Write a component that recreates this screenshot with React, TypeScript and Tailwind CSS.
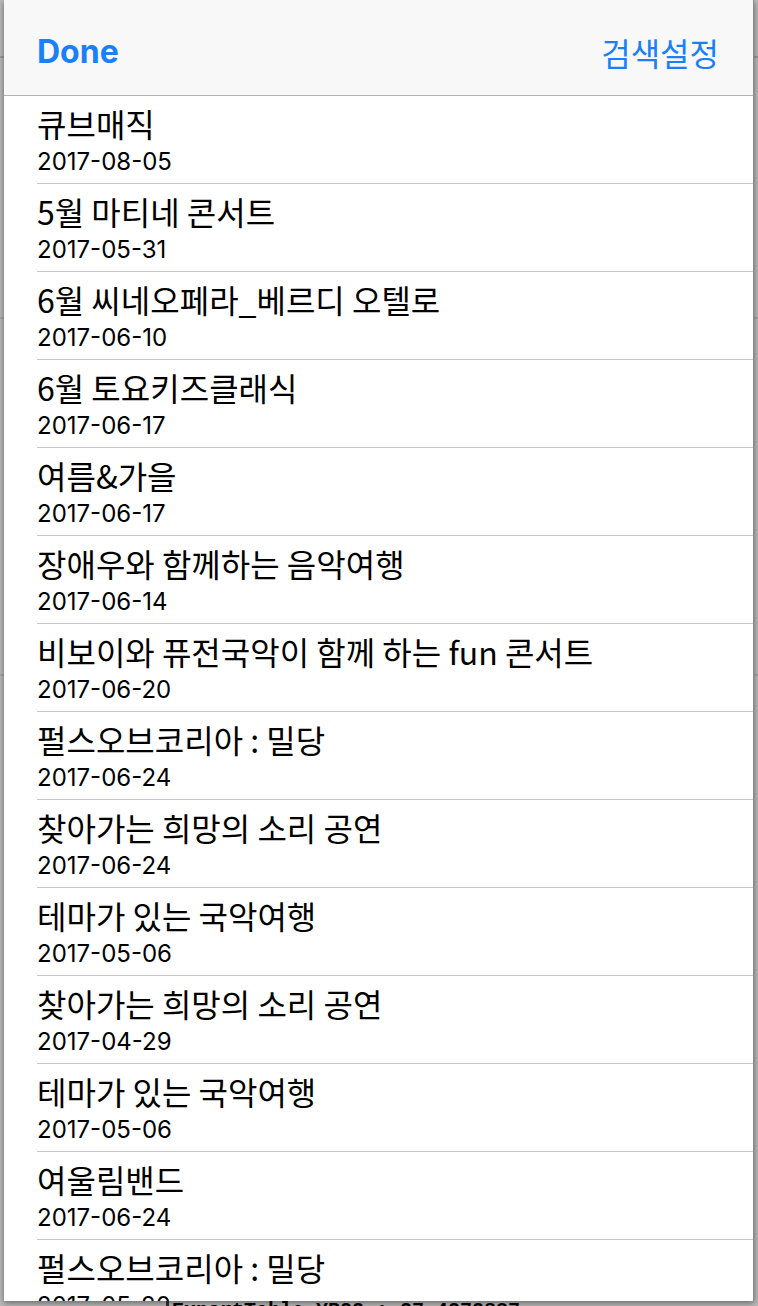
import React from "react";

const items: [string, string][] = [
  ["큐브매직", "2017-08-05"],
  ["5월 마티네 콘서트", "2017-05-31"],
  ["6월 씨네오페라_베르디 오텔로", "2017-06-10"],
  ["6월 토요키즈클래식", "2017-06-17"],
  ["여름&가을", "2017-06-17"],
  ["장애우와 함께하는 음악여행", "2017-06-14"],
  ["비보이와 퓨전국악이 함께 하는 fun 콘서트", "2017-06-20"],
  ["펄스오브코리아 : 밀당", "2017-06-24"],
  ["찾아가는 희망의 소리 공연", "2017-06-24"],
  ["테마가 있는 국악여행", "2017-05-06"],
  ["찾아가는 희망의 소리 공연", "2017-04-29"],
  ["테마가 있는 국악여행", "2017-05-06"],
  ["여울림밴드", "2017-06-24"],
  ["펄스오브코리아 : 밀당", "2017-05-20"],
];

const kr = { fontFamily: '"Noto Sans CJK KR", "Noto Sans", sans-serif' };
const num = { fontFamily: 'Inter, "Noto Sans CJK KR", sans-serif' };

export default function App() {
  return (
    <div className="relative w-[758px] h-[1306px] overflow-hidden bg-[#b9b9b9]">
      {/* dimmed background content */}
      <div className="absolute left-0 top-[56px] w-full h-[2px] bg-[#9a9a9a]" />
      <div className="absolute left-0 top-[317px] w-full h-[2px] bg-[#a5a5a5]" />
      <div className="absolute left-0 top-[674px] w-full h-[2px] bg-[#a5a5a5]" />
      <div className="absolute left-[166px] top-[1296px] w-[3px] h-[10px] bg-[#333]" />
      <div
        className="absolute left-[172px] top-[1301px] text-[20px] font-bold text-black whitespace-pre leading-none"
        style={{ fontFamily: '"Liberation Mono", monospace' }}
      >
        ExportTable YR22 : 27.4272837
      </div>

      {/* modal sheet */}
      <div className="absolute left-[4px] top-0 w-[750px] h-[1301px] bg-white flex flex-col overflow-hidden border-r border-[#8a8a8a] shadow-[0_2px_6px_rgba(0,0,0,0.45)]">
        <div className="h-[96px] shrink-0 bg-[#f8f8f8] border-b border-[#b2b2b2] flex items-center justify-between pl-[33px] pr-[34px] pt-[8px]">
          <span className="text-[32px] font-bold text-[#1a7ff9]" style={num}>
            Done
          </span>
          <span className="text-[32px] text-[#1a7ff9]" style={kr}>
            검색설정
          </span>
        </div>
        <div className="flex flex-col">
          {items.map(([title, date], i) => (
            <div
              key={i}
              className="ml-[33px] h-[88px] shrink-0 border-b border-[#c8c7cc] flex flex-col pt-[8px]"
            >
              <div className="text-[32px] leading-[38px] text-black whitespace-nowrap" style={kr}>
                {title}
              </div>
              <div className="text-[24px] leading-[28px] text-black mt-[6px]" style={num}>
                {date}
              </div>
            </div>
          ))}
        </div>
      </div>
    </div>
  );
}
